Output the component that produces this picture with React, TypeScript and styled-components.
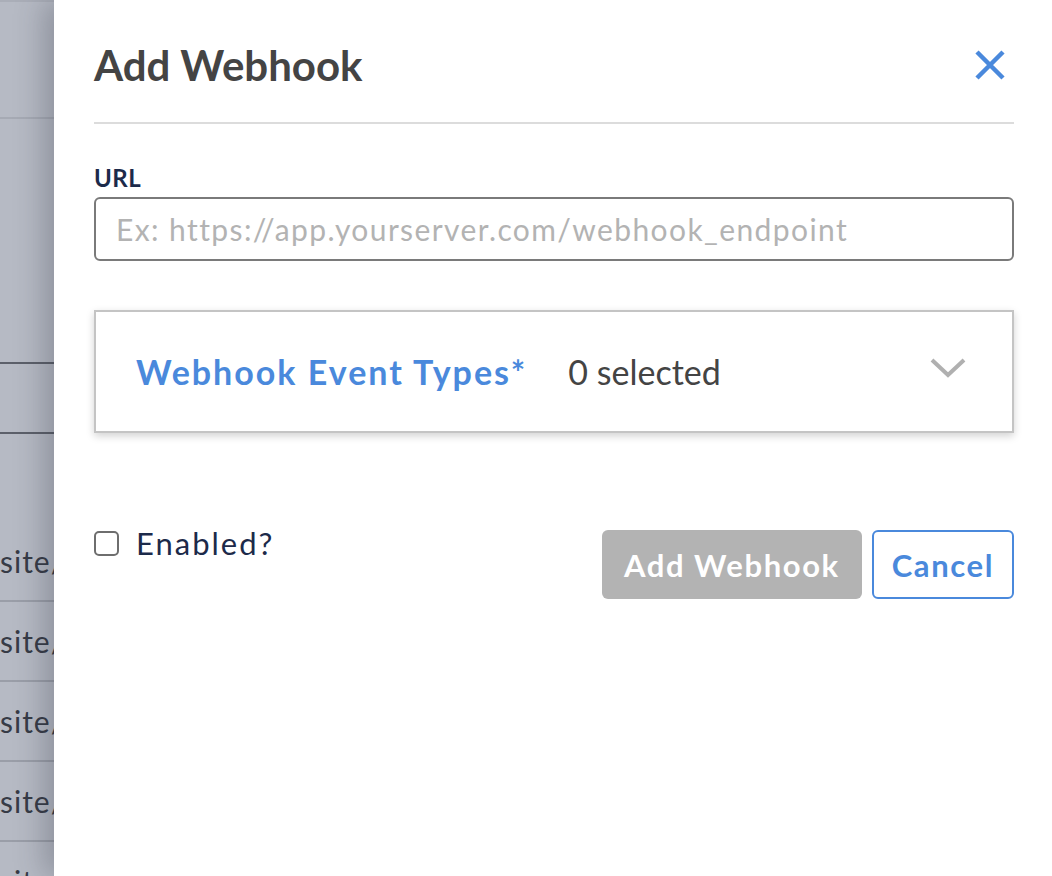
import React from 'react';
import styled, { createGlobalStyle } from 'styled-components';

const GlobalStyle = createGlobalStyle`
  html, body {
    margin: 0;
    padding: 0;
    background: #ffffff;
    font-family: Lato, "Open Sans", Arial, sans-serif;
  }
`;

const Screen = styled.div`
  display: flex;
  height: 100vh;
  overflow: hidden;
`;

/* dimmed table behind the drawer */
const Backdrop = styled.div`
  width: 54px;
  flex-shrink: 0;
  display: flex;
  flex-direction: column;
  background: #b6bac4;
  overflow: hidden;
`;

const BackRow = styled.div<{ $h: number; $line?: string }>`
  height: ${p => p.$h}px;
  flex-shrink: 0;
  box-sizing: border-box;
  border-bottom: ${p => (p.$line ? `2px solid ${p.$line}` : 'none')};
  display: flex;
  align-items: center;
  font-size: 30px;
  letter-spacing: 1px;
  color: #363b46;
  white-space: nowrap;
`;

const Drawer = styled.div`
  flex: 1;
  background: #ffffff;
  box-shadow: -10px 0 28px rgba(40, 44, 56, 0.28);
  padding: 0 38px 0 40px;
  position: relative;
  z-index: 1;
`;

const Header = styled.div`
  display: flex;
  align-items: center;
  justify-content: space-between;
  padding: 40px 0 32px;
  border-bottom: 2px solid #dcdcdc;
`;

const Title = styled.h1`
  margin: 0;
  font-size: 42px;
  line-height: 50px;
  font-weight: 700;
  color: #444444;
`;

const CloseButton = styled.button`
  border: none;
  background: none;
  padding: 0;
  margin-right: 8px;
  width: 32px;
  height: 32px;
  display: flex;
  align-items: center;
  justify-content: center;
  cursor: pointer;
`;

const Label = styled.label`
  display: block;
  margin-top: 40px;
  font-size: 24px;
  line-height: 28px;
  font-weight: 700;
  letter-spacing: 0.5px;
  color: #1c2a4a;
`;

const UrlInput = styled.input`
  display: block;
  box-sizing: border-box;
  width: 100%;
  height: 64px;
  margin-top: 5px;
  padding: 0 20px;
  border: 2px solid #7a7a7a;
  border-radius: 6px;
  font-family: Lato, "Open Sans", Arial, sans-serif;
  font-size: 30px;
  letter-spacing: 1.4px;
  color: #333;
  outline: none;

  &::placeholder {
    color: #b3b3b3;
  }
`;

const EventBox = styled.div`
  box-sizing: border-box;
  height: 123px;
  margin-top: 49px;
  border: 2px solid #c4c4c4;
  box-shadow: 0 3px 8px rgba(0, 0, 0, 0.18);
  display: flex;
  align-items: center;
  padding: 0 46px 0 40px;
`;

const EventTitle = styled.span`
  font-size: 34px;
  font-weight: 700;
  letter-spacing: 2px;
  color: #4a89dc;
`;

const EventCount = styled.span`
  margin-left: 41px;
  font-size: 34px;
  color: #444444;
  flex: 1;
`;

const ChevronWrap = styled.span`
  display: flex;
  margin-bottom: 7px;
`;

const Footer = styled.div`
  display: flex;
  justify-content: space-between;
  align-items: flex-start;
  margin-top: 97px;
`;

const CheckLabel = styled.label`
  display: flex;
  align-items: center;
  gap: 17px;
  margin-top: -5px;
  font-size: 31px;
  line-height: 37px;
  letter-spacing: 2px;
  color: #1c2a4a;
`;

const CheckBox = styled.span`
  width: 25px;
  height: 25px;
  flex-shrink: 0;
  box-sizing: border-box;
  border: 2px solid #6e6e6e;
  border-radius: 5px;
`;

const Buttons = styled.div`
  display: flex;
  gap: 10px;
`;

const Button = styled.button<{ $variant: 'disabled' | 'outline' }>`
  height: 69px;
  box-sizing: border-box;
  border-radius: 6px;
  font-family: Lato, "Open Sans", Arial, sans-serif;
  font-size: 31px;
  font-weight: 700;
  letter-spacing: 1.6px;
  cursor: pointer;
  ${p =>
    p.$variant === 'disabled'
      ? `background: #b3b3b3; color: #ffffff; border: none; padding: 0 22px;`
      : `background: #ffffff; color: #4a89dc; border: 2px solid #4a89dc; padding: 0 18px;`}
`;

const XIcon = () => (
  <svg width="30" height="30" viewBox="0 0 30 30">
    <path d="M2 2 L28 28 M28 2 L2 28" stroke="#4a89dc" strokeWidth="4.5" strokeLinecap="butt" />
  </svg>
);

const Chevron = () => (
  <svg width="36" height="22" viewBox="0 0 36 22">
    <path d="M2 3 L18 18 L34 3" stroke="#b0b0b0" strokeWidth="4" fill="none" />
  </svg>
);

const App = () => {
  const siteRows = [0, 1, 2, 3, 4];
  return (
    <Screen>
      <GlobalStyle />
      <Backdrop>
        <BackRow $h={119} $line="#a6aab4" style={{ borderTop: '2px solid #aaaeb8' }} />
        <BackRow $h={245} $line="#5c606a" />
        <BackRow $h={70} $line="#5c606a" />
        <BackRow $h={88} />
        {siteRows.map(i => (
          <BackRow key={i} $h={80} $line="#9a9ea8">site/webhook</BackRow>
        ))}
      </Backdrop>
      <Drawer>
        <Header>
          <Title>Add Webhook</Title>
          <CloseButton aria-label="Close">
            <XIcon />
          </CloseButton>
        </Header>
        <Label htmlFor="url">URL</Label>
        <UrlInput id="url" placeholder="Ex: https://app.yourserver.com/webhook_endpoint" />
        <EventBox>
          <EventTitle>Webhook Event Types*</EventTitle>
          <EventCount>0 selected</EventCount>
          <ChevronWrap>
            <Chevron />
          </ChevronWrap>
        </EventBox>
        <Footer>
          <CheckLabel>
            <CheckBox />
            Enabled?
          </CheckLabel>
          <Buttons>
            <Button $variant="disabled">Add Webhook</Button>
            <Button $variant="outline">Cancel</Button>
          </Buttons>
        </Footer>
      </Drawer>
    </Screen>
  );
};

export default App;
